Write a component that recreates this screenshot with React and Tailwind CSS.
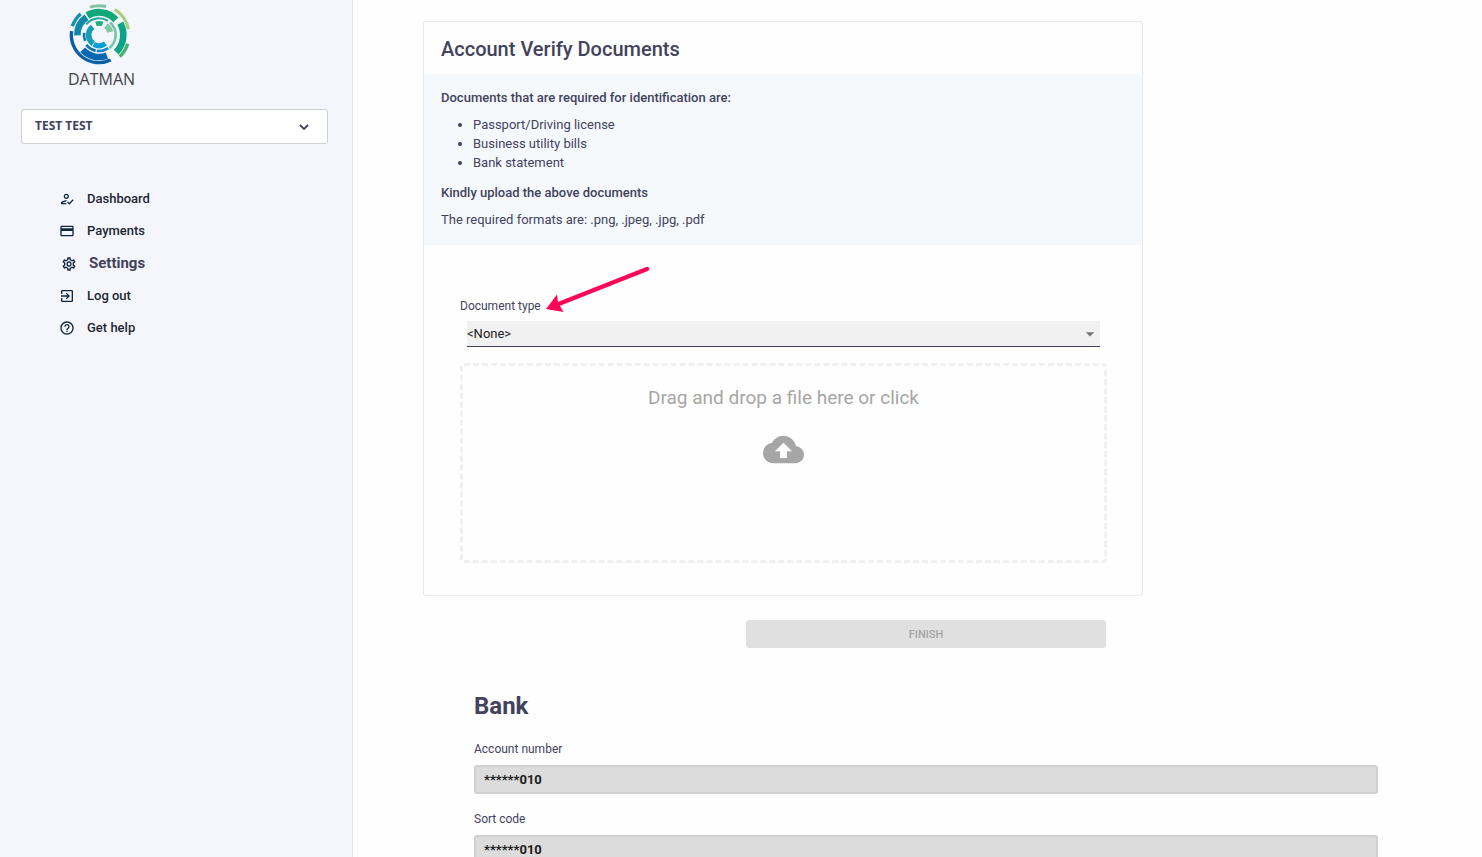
import { useState } from "react";
import {
  MdOutlineHowToReg,
  MdPayment,
  MdOutlineSettings,
  MdExitToApp,
  MdHelpOutline,
  MdBackup,
  MdArrowDropDown,
} from "react-icons/md";

const menu = [
  { name: "Dashboard", Icon: MdOutlineHowToReg },
  { name: "Payments", Icon: MdPayment },
  { name: "Settings", Icon: MdOutlineSettings, active: true },
  { name: "Log out", Icon: MdExitToApp },
  { name: "Get help", Icon: MdHelpOutline },
];

// radius, start angle, end angle (clockwise from the top), thickness, color
const rings = [
  [88, -18, 14, 9, "#7cc5a0"],
  [90, 32, 79, 9, "#a5cf7a"],
  [90, 107, 136, 10, "#43b06d"],
  [84, -72, -41, 10, "#1a8db4"],
  [83, 155, 278, 10, "#0b5fa5"],
  [68, -31, 48, 21, "#0fa878"],
  [73, 61, 135, 20, "#0ba585"],
  [65, -91, -35, 20, "#0d88a6"],
  [66, 159, 228, 20, "#0668b2"],
  [50, -50, 32, 6, "#1fa79b"],
  [50, 42, 142, 8, "#74c6b0"],
  [48, 145, 188, 8, "#1287c9"],
  [48, 192, 232, 8, "#0e70b5"],
  [45, 247, 278, 8, "#1477b5"],
  [31, 214, 322, 17, "#149fb4"],
  [32, 143, 210, 15, "#08a0d6"],
  [35, -15, 18, 14, "#20ad7c"],
  [35, 36, 75, 18, "#80c9a0"],
];

function arc(r, from, to) {
  const point = (deg) => {
    const a = ((deg - 90) * Math.PI) / 180;
    return `${(96 + r * Math.cos(a)).toFixed(1)} ${(96 + r * Math.sin(a)).toFixed(1)}`;
  };
  return `M${point(from)}A${r} ${r} 0 ${to - from > 180 ? 1 : 0} 1 ${point(to)}`;
}

function Logo() {
  return (
    <div className="ml-[67px] flex flex-col items-start">
      <svg viewBox="0 0 192 192" className="w-16 h-16" fill="none">
        {rings.map(([r, from, to, width, color]) => (
          <path key={`${r}-${from}`} d={arc(r, from, to)} stroke={color} strokeWidth={width} />
        ))}
      </svg>
      <span className="ml-px font-['Open_Sans'] font-medium text-base leading-6 text-[#3f3f44]">
        DATMAN
      </span>
    </div>
  );
}

function Sidebar() {
  return (
    <aside className="w-[353px] shrink-0 bg-[#f5f6fb] border-r border-[#e4e5ea] pt-[3px]">
      <Logo />
      <button className="mt-[18px] ml-[21px] w-[307px] h-[35px] px-[13px] flex items-center justify-between bg-white border border-[#d0d0d0] rounded-[3px]">
        <span className="pb-[2px] font-['Noto_Sans'] font-bold text-xs leading-4 text-[#43425d]">
          TEST TEST
        </span>
        <svg viewBox="0 0 10 6" className="w-[10px] h-[6px] mr-[5px]" fill="none">
          <path d="M1 1l4 4 4-4" stroke="#43425d" strokeWidth="1.8" />
        </svg>
      </button>
      <nav className="mt-[39px] ml-[59px] flex flex-col">
        {menu.map(({ name, Icon, active }) => (
          <a
            key={name}
            href="#"
            className={
              active
                ? "h-[33px] ml-[2px] flex items-center gap-3 font-bold text-[15px] text-[#43425d]"
                : "h-8 flex items-center gap-3 font-medium text-[13px] text-[#1c2733]"
            }
          >
            <Icon className="w-4 h-4 text-[#10253f]" />
            {name}
          </a>
        ))}
      </nav>
    </aside>
  );
}

function UploadArea() {
  return (
    <label className="mt-4 h-[200px] flex flex-col items-center border-[3px] border-dashed border-[#f0f0f0] rounded-sm text-[#a6a6a6] cursor-pointer">
      <span className="mt-[18px] text-[19px] leading-7">Drag and drop a file here or click</span>
      <MdBackup className="mt-[17px] w-[41px] h-[41px]" />
      <input type="file" accept=".png,.jpeg,.jpg,.pdf" className="sr-only" />
    </label>
  );
}

function VerifyCard() {
  const [type, setType] = useState("none");

  return (
    <section className="relative max-w-[720px] border border-[#e8e9ec] rounded-[3px] text-[13px]">
      <h1 className="px-[17px] pt-[13px] pb-[11px] font-medium text-xl leading-7">
        Account Verify Documents
      </h1>
      <div className="bg-[#f5f9fc] px-[17px] pt-[14px] pb-4 leading-[19px]">
        <h2 className="font-medium">Documents that are required for identification are:</h2>
        <ul className="list-disc pl-8 my-2">
          <li>Passport/Driving license</li>
          <li>Business utility bills</li>
          <li>Bank statement</li>
        </ul>
        <h2 className="mt-[11px] font-medium">Kindly upload the above documents</h2>
        <p className="mt-2">The required formats are: .png, .jpeg, .jpg, .pdf</p>
      </div>
      <div className="pl-9 pr-[35px] pt-[53px] pb-8">
        <label htmlFor="docType" className="block text-xs leading-4">
          Document type
        </label>
        <div className="relative mt-[7px] mx-[7px]">
          <select
            id="docType"
            value={type}
            onChange={(e) => setType(e.target.value)}
            className="block w-full h-[26px] appearance-none bg-[#f1f1f1] border-b border-[#43425d] text-[#212121]"
          >
            <option value="none">&lt;None&gt;</option>
            <option value="passport">Passport/Driving license</option>
            <option value="utility">Business utility bills</option>
            <option value="bank">Bank statement</option>
          </select>
          <MdArrowDropDown className="absolute right-0 top-[3px] w-5 h-5 text-[#757575] pointer-events-none" />
        </div>
        <UploadArea />
      </div>
      <svg
        viewBox="0 0 104 46"
        className="absolute left-[122px] top-[244px] w-[104px] h-[46px] pointer-events-none"
      >
        <path d="M101 3L10 39" stroke="#ff0556" strokeWidth="4.5" strokeLinecap="round" />
        <path d="M0 43L11 28.500L12 36.500L17.500 46Z" fill="#ff0556" />
      </svg>
    </section>
  );
}

function Field({ id, label, value }) {
  return (
    <div className="mb-[17px]">
      <label htmlFor={id} className="block text-xs leading-4 mb-2">
        {label}
      </label>
      <input
        id={id}
        defaultValue={value}
        disabled
        className="block w-full h-[29px] px-2 bg-[#dcdcdc] border-2 border-[#d0d0d0] rounded-[3px] font-bold text-[13px] text-[#212121]"
      />
    </div>
  );
}

function App() {
  return (
    <div className="h-screen flex overflow-hidden bg-[#fefefe] font-[Roboto,sans-serif] text-[#43425d]">
      <Sidebar />
      <main className="flex-1 overflow-hidden pt-[21px] pl-[70px] pr-[104px]">
        <VerifyCard />
        <div className="max-w-[720px] mt-6 pr-[37px] flex justify-end">
          <button
            disabled
            className="w-[360px] h-7 pt-[2px] bg-[#e0e0e0] rounded-[3px] font-medium text-[11px] text-[#a6a6a6]"
          >
            FINISH
          </button>
        </div>
        <section className="mt-10 pl-[51px]">
          <h2 className="font-bold text-2xl leading-9 mb-[17px]">Bank</h2>
          <Field id="account" label="Account number" value="******010" />
          <Field id="sort" label="Sort code" value="******010" />
        </section>
      </main>
    </div>
  );
}

export default App;
